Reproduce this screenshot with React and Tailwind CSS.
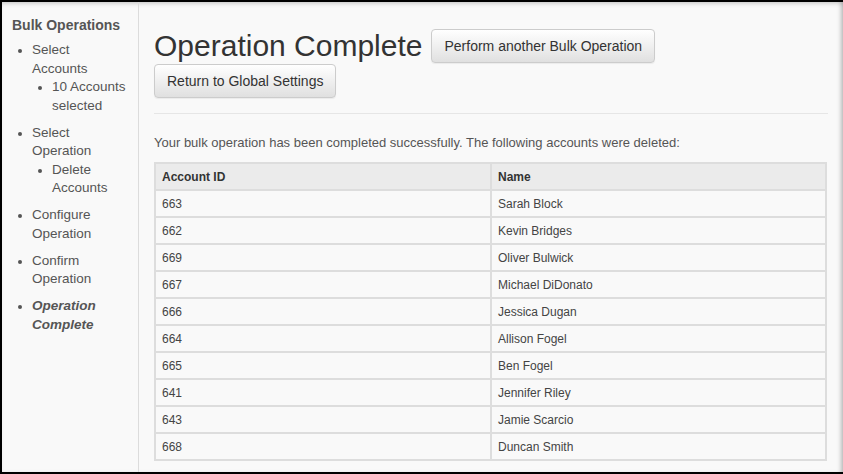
import React from "react";

const rows = [
  ["663", "Sarah Block"],
  ["662", "Kevin Bridges"],
  ["669", "Oliver Bulwick"],
  ["667", "Michael DiDonato"],
  ["666", "Jessica Dugan"],
  ["664", "Allison Fogel"],
  ["665", "Ben Fogel"],
  ["641", "Jennifer Riley"],
  ["643", "Jamie Scarcio"],
  ["668", "Duncan Smith"],
];

const Bullet = () => (
  <span className="absolute left-[-14px] top-[8px] w-[4px] h-[4px] rounded-full bg-[#555]" />
);

export default function App() {
  return (
    <div
      className="w-[843px] h-[474px] overflow-hidden bg-[#f9f9f9] border-l-2 border-t-2 border-b-2 border-black flex shadow-[inset_0_4px_4px_-2px_rgba(0,0,0,0.15),inset_-4px_0_4px_-2px_rgba(0,0,0,0.25)] text-[#555]"
      style={{ fontFamily: '"Liberation Sans", Arial, sans-serif' }}
    >
      {/* Sidebar */}
      <div className="w-[137px] shrink-0 border-r border-[#dcdcdc] pt-[13px] pl-[10px] pr-[4px]">
        <div className="text-[14px] font-bold leading-[20px] text-[#555]">Bulk Operations</div>
        <ul className="mt-[6px] pl-[20px] text-[13.5px] leading-[18.5px] text-[#555] whitespace-nowrap">
          <li className="relative mb-[8.5px]">
            <Bullet />
            Select<br />Accounts
            <ul className="pl-[20px]">
              <li className="relative">
                <Bullet />
                10 Accounts<br />selected
              </li>
            </ul>
          </li>
          <li className="relative mb-[8.5px]">
            <Bullet />
            Select<br />Operation
            <ul className="pl-[20px]">
              <li className="relative">
                <Bullet />
                Delete<br />Accounts
              </li>
            </ul>
          </li>
          <li className="relative mb-[8.5px]">
            <Bullet />
            Configure<br />Operation
          </li>
          <li className="relative mb-[8.5px]">
            <Bullet />
            Confirm<br />Operation
          </li>
          <li className="relative font-bold italic">
            <Bullet />
            Operation<br />Complete
          </li>
        </ul>
      </div>

      {/* Main */}
      <div className="flex-1 pl-[15px] pr-[15px] pt-[27px]">
        <div className="flex flex-wrap items-center gap-x-[9px]">
          <h1 className="text-[30px] leading-[34px] text-[#333]">Operation Complete</h1>
          <button className="h-[34px] px-[12px] text-[14px] text-[#333] border border-[#ccc] rounded-[4px] bg-gradient-to-b from-white to-[#e0e0e0] shadow-[0_1px_1px_rgba(0,0,0,0.06)]">
            Perform another Bulk Operation
          </button>
          <button className="mt-[1px] h-[34px] px-[12px] text-[14px] text-[#333] border border-[#ccc] rounded-[4px] bg-gradient-to-b from-white to-[#e0e0e0] shadow-[0_1px_1px_rgba(0,0,0,0.06)]">
            Return to Global Settings
          </button>
        </div>
        <div className="mt-[15px] border-t border-[#e6e6e6]" />
        <p className="mt-[20px] text-[13px] leading-[18px] text-[#555]">
          Your bulk operation has been completed successfully. The following accounts were deleted:
        </p>
        <table className="mt-[10px] w-[673px] border-collapse border-2 border-[#dddddd] text-[12px] text-[#444]">
          <thead>
            <tr className="bg-[#ebebeb]">
              <th className="h-[27px] w-[336px] border-2 border-[#dddddd] px-[6px] text-left font-bold text-[#333]">Account ID</th>
              <th className="h-[27px] border-2 border-[#dddddd] px-[6px] text-left font-bold text-[#333]">Name</th>
            </tr>
          </thead>
          <tbody>
            {rows.map(([id, name]) => (
              <tr key={id}>
                <td className="h-[27px] border-2 border-[#dddddd] px-[6px]">{id}</td>
                <td className="h-[27px] border-2 border-[#dddddd] px-[6px]">{name}</td>
              </tr>
            ))}
          </tbody>
        </table>
      </div>
    </div>
  );
}
